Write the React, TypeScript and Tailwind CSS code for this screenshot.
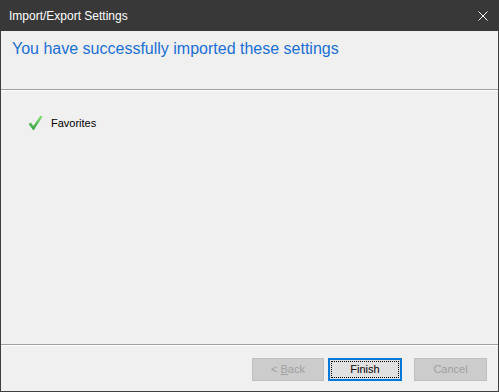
export default function App() {
  return (
    <div className="w-[499px] h-[392px] flex flex-col bg-[#f0f0f0] border-x border-b border-[#3f3f3f] font-['Liberation_Sans',Arial,sans-serif]">
      <div className="h-[31px] flex items-center justify-between bg-[#383838] text-white -mx-px pl-[9px] pr-[10px]">
        <span className="text-[12px]">Import/Export Settings</span>
        <svg width="10" height="10" viewBox="0 0 10 10" className="mr-[1px]">
          <path d="M0.5 0.5L9.5 9.5M9.5 0.5L0.5 9.5" stroke="#ffffff" strokeWidth="1" />
        </svg>
      </div>
      <div className="h-[58px] pl-[11px] pt-[6px]">
        <h1 className="text-[16px] text-[#1a6fd6] leading-[24px]">You have successfully imported these settings</h1>
      </div>
      <div className="h-px bg-[#a0a0a0]" />
      <div className="h-px bg-white" />
      <div className="flex-1 pt-[24px] pl-[27px]">
        <div className="flex items-center gap-[8px]">
          <svg width="15" height="16" viewBox="0 0 15 16">
            <defs>
              <linearGradient id="g" x1="0" y1="0" x2="0" y2="1">
                <stop offset="0" stopColor="#8ade78" />
                <stop offset="1" stopColor="#2f9e3c" />
              </linearGradient>
            </defs>
            <path d="M0.5 9L3 7.5L5.3 11L12.5 0.5L14.5 1.8L5.5 15.5Z" fill="url(#g)" />
          </svg>
          <span className="text-[11px] text-black">Favorites</span>
        </div>
      </div>
      <div className="h-px bg-[#a0a0a0]" />
      <div className="h-px bg-white" />
      <div className="flex-1 max-h-[45px] flex items-start justify-end pt-[12px] pr-[11px] text-[11px]">
        <button className="w-[72px] h-[23px] bg-[#cccccc] border border-[#bfbfbf] text-[#a0a0a0]">
          &lt; <span className="underline">B</span>ack
        </button>
        <button className="ml-[4px] w-[74px] h-[23px] bg-[#e1e1e1] border-2 border-[#0078d7] p-px text-black">
          <span className="flex items-center justify-center w-full h-full border border-dotted border-black">Finish</span>
        </button>
        <button className="ml-[12px] w-[73px] h-[23px] bg-[#cccccc] border border-[#bfbfbf] text-[#a0a0a0]">Cancel</button>
      </div>
    </div>
  );
}
